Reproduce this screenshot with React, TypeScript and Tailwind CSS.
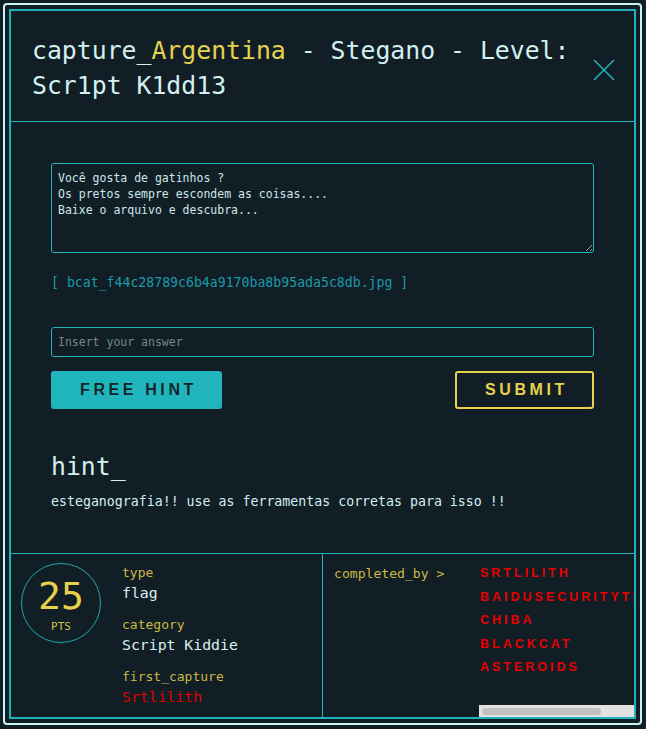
import React from 'react';

const mono = "font-['DejaVu_Sans_Mono',monospace]";

const completedBy = ['SRTLILITH', 'BAIDUSECURITYTEAM', 'CHIBA', 'BLACKCAT', 'ASTEROIDS'];

export const App: React.FC = () => {
  return (
    <div className={`w-[646px] h-[729px] bg-[#121e25] p-[3px] ${mono}`}>
      <div className="h-[722px] w-[639px] rounded-[4px] border-2 border-[#c6f3f3] p-[4px]">
        <div className="flex h-full flex-col border-2 border-[#20b3bb]">
          {/* Header */}
          <div className="flex items-center justify-between border-b border-[#20b3bb] pl-[21px] pr-[19px] pt-[22px] pb-[18px]">
            <h1 className="w-[555px] text-[24.8px] leading-[35px] text-[#d2f0f0]">
              capture_<span className="text-[#e6d24c]">Argentina</span> - Stegano - Level: Scr1pt K1dd13
            </h1>
            <svg width="22" height="22" viewBox="0 0 22 22" className="mt-[3px]">
              <path d="M1 1 L21 21 M21 1 L1 21" stroke="#20b3bb" strokeWidth="1.5" fill="none" />
            </svg>
          </div>

          {/* Body */}
          <div className="flex flex-1 flex-col px-[40px] pt-[41px]">
            <textarea
              readOnly
              defaultValue={'Você gosta de gatinhos ?\nOs pretos sempre escondem as coisas....\nBaixe o arquivo e descubra...'}
              className={`h-[90px] w-full resize-y rounded-[3px] border border-[#20b3bb] bg-transparent px-[6px] pt-[6px] text-[11.5px] leading-[16px] text-[#cbe8ea] outline-none ${mono}`}
            />
            <div className="mt-[20px] text-[13.2px] leading-[20px] text-[#1b9aab]">
              [ bcat_f44c28789c6b4a9170ba8b95ada5c8db.jpg ]
            </div>
            <input
              placeholder="Insert your answer"
              className={`mt-[34px] h-[30px] w-full rounded-[3px] border border-[#20b3bb] bg-transparent px-[6px] text-[11.5px] text-[#cbe8ea] outline-none placeholder:text-[#74868b] ${mono}`}
            />
            <div className="mt-[14px] flex items-center justify-between">
              <button className="flex h-[38px] w-[171px] items-center justify-center rounded-[3px] bg-[#20b5bc] pl-[4px] font-['Liberation_Sans',sans-serif] text-[16px] font-bold tracking-[3.6px] text-[#12262b]">
                FREE HINT
              </button>
              <button className="flex h-[38px] w-[139px] items-center justify-center rounded-[3px] border-2 border-[#e6d24c] pl-[4px] font-['Liberation_Sans',sans-serif] text-[16px] font-bold tracking-[3.6px] text-[#e6d24c]">
                SUBMIT
              </button>
            </div>
            <h2 className="mt-[40px] text-[24.8px] leading-[35px] text-[#d2f0f0]">hint_</h2>
            <p className="mt-[8px] text-[13.25px] leading-[20px] text-[#d2f0f0]">
              esteganografia!! use as ferramentas corretas para isso !!
            </p>
          </div>

          {/* Footer */}
          <div className="flex h-[164px] border-t border-[#20b3bb]">
            <div className="flex w-[312px] border-r border-[#20b3bb] pl-[10px] pt-[9px]">
              <div className="flex h-[80px] w-[80px] shrink-0 flex-col items-center justify-center rounded-full border border-[#20a7ae]">
                <span className="mt-[4px] text-[38px] leading-[40px] text-[#e6d24c]">25</span>
                <span className="mt-[4px] text-[11px] leading-[14px] text-[#d4c24a]">PTS</span>
              </div>
              <div className="ml-[21px] flex flex-col pt-[2px]">
                <span className="text-[13px] leading-[16px] text-[#cbb944]">type</span>
                <span className="mt-[2px] text-[14.8px] leading-[20px] text-[#d8f0f2]">flag</span>
                <span className="mt-[14px] text-[13px] leading-[16px] text-[#cbb944]">category</span>
                <span className="mt-[2px] text-[14.8px] leading-[20px] text-[#d8f0f2]">Script Kiddie</span>
                <span className="mt-[14px] text-[13px] leading-[16px] text-[#cbb944]">first_capture</span>
                <span className="mt-[2px] text-[14.8px] leading-[20px] text-[#e00000]">Srtlilith</span>
              </div>
            </div>
            <div className="flex min-w-0 flex-1">
              <div className="w-[156px] shrink-0 pl-[11px] pt-[12px] text-[13.1px] leading-[16px] text-[#cbb944]">
                completed_by &gt;
              </div>
              <div className="flex min-w-0 flex-1 flex-col">
                <div className="flex flex-1 flex-col overflow-hidden pl-[1px] pt-[8px]">
                  {completedBy.map((name) => (
                    <span
                      key={name}
                      className="whitespace-nowrap font-['Liberation_Sans',sans-serif] text-[12.5px] font-bold leading-[23.5px] tracking-[3px] text-[#e80000]"
                    >
                      {name}
                    </span>
                  ))}
                </div>
                <div className="flex h-[12px] items-center bg-[#e2e2e2] px-[3px]">
                  <div className="h-[7px] w-[119px] rounded-full bg-[#c1c1c1]" />
                </div>
              </div>
            </div>
          </div>
        </div>
      </div>
    </div>
  );
};

export default App;
